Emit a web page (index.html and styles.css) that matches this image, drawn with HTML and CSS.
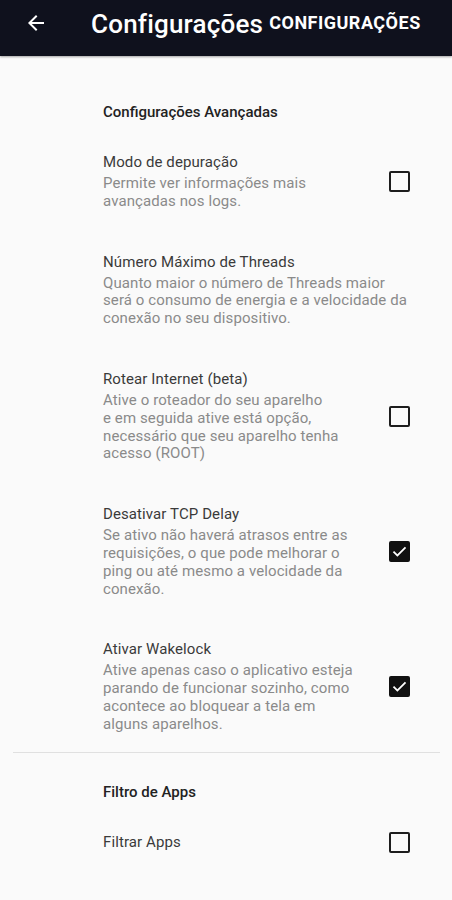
FILE: index.html
```html
<!DOCTYPE html>
<html lang="pt">
<head>
<meta charset="utf-8">
<title>Configurações</title>
<link rel="stylesheet" href="styles.css">
</head>
<body>
<header class="toolbar">
  <svg class="back" width="24" height="24" viewBox="0 0 24 24"><path d="M20 11H7.83l5.59-5.59L12 4l-8 8 8 8 1.41-1.41L7.83 13H20v-2z" fill="#fff"/></svg>
  <h1 class="title">Configurações</h1>
  <span class="subtitle">CONFIGURAÇÕES</span>
</header>
<main class="prefs">
  <section class="group first">
    <h2 class="group-title">Configurações Avançadas</h2>
    <div class="item">
      <div class="text">
        <div class="item-title">Modo de depuração</div>
        <div class="summary">Permite ver informações mais<br>avançadas nos logs.</div>
      </div>
      <span class="check"></span>
    </div>
    <div class="item">
      <div class="text">
        <div class="item-title">Número Máximo de Threads</div>
        <div class="summary">Quanto maior o número de Threads maior<br>será o consumo de energia e a velocidade da<br>conexão no seu dispositivo.</div>
      </div>
    </div>
    <div class="item">
      <div class="text">
        <div class="item-title">Rotear Internet (beta)</div>
        <div class="summary">Ative o roteador do seu aparelho<br>e em seguida ative está opção,<br>necessário que seu aparelho tenha<br>acesso (ROOT)</div>
      </div>
      <span class="check"></span>
    </div>
    <div class="item">
      <div class="text">
        <div class="item-title">Desativar TCP Delay</div>
        <div class="summary">Se ativo não haverá atrasos entre as<br>requisições, o que pode melhorar o<br>ping ou até mesmo a velocidade da<br>conexão.</div>
      </div>
      <span class="check on"><svg width="18" height="18" viewBox="0 0 24 24"><path d="M9 16.6L4.4 12l-1.8 1.8L9 20.2 21.4 7.8 19.6 6z" fill="#fff"/></svg></span>
    </div>
    <div class="item">
      <div class="text">
        <div class="item-title">Ativar Wakelock</div>
        <div class="summary">Ative apenas caso o aplicativo esteja<br>parando de funcionar sozinho, como<br>acontece ao bloquear a tela em<br>alguns aparelhos.</div>
      </div>
      <span class="check on"><svg width="18" height="18" viewBox="0 0 24 24"><path d="M9 16.6L4.4 12l-1.8 1.8L9 20.2 21.4 7.8 19.6 6z" fill="#fff"/></svg></span>
    </div>
  </section>
  <hr class="divider">
  <section class="group">
    <h2 class="group-title">Filtro de Apps</h2>
    <div class="item">
      <div class="text">
        <div class="item-title">Filtrar Apps</div>
      </div>
      <span class="check"></span>
    </div>
  </section>
</main>
</body>
</html>
```
FILE: styles.css
```css
* { box-sizing: border-box; }
html, body { margin: 0; padding: 0; }
body {
  background: #fafafa;
  font-family: Roboto, "Noto Sans", sans-serif;
  width: 452px;
  height: 900px;
  overflow: hidden;
}
.toolbar {
  height: 56px;
  background: #0f111d;
  display: flex;
  align-items: center;
  padding-left: 24px;
  box-shadow: 0 1px 2px rgba(0,0,0,0.35);
  position: relative;
}
.back { width: 24px; height: 24px; flex: none; margin-top: -10px; }
.title {
  margin: 0 0 0 43px;
  font-size: 26px;
  letter-spacing: 0.2px;
  font-weight: 500;
  color: #fff;
  margin-top: -9px;
}
.subtitle {
  margin-left: 6px;
  font-size: 18px;
  letter-spacing: 0.5px;
  font-weight: 700;
  color: #fff;
  margin-top: -12px;
}
.prefs { padding: 0; }
.group { padding-top: 29px; }
.group.first { padding-top: 46px; }
.group-title {
  margin: 0 0 10px 103px;
  font-size: 15px;
  line-height: 20px;
  font-weight: 500;
  color: #222;
}
.item {
  display: flex;
  align-items: center;
  padding: 20px 42px 21px 103px;
}
.text { flex: 1; min-width: 0; }
.item-title {
  font-size: 15px;
  line-height: 20px;
  letter-spacing: 0.1px;
  color: #3a3a3a;
  white-space: nowrap;
}
.summary {
  margin-top: 3px;
  font-size: 15px;
  line-height: 17.8px;
  letter-spacing: 0.1px;
  color: #8a8a8a;
  white-space: nowrap;
}
.check {
  flex: none;
  width: 21px;
  height: 21px;
  border: 2px solid #1d1d1d;
  border-radius: 2px;
  display: flex;
  align-items: center;
  justify-content: center;
}
.check.on { background: #111; border-color: #111; }
.divider {
  margin: -3px 12px 0 13px;
  border: none;
  border-top: 1px solid #e0e0e0;
  height: 0;
}
```
